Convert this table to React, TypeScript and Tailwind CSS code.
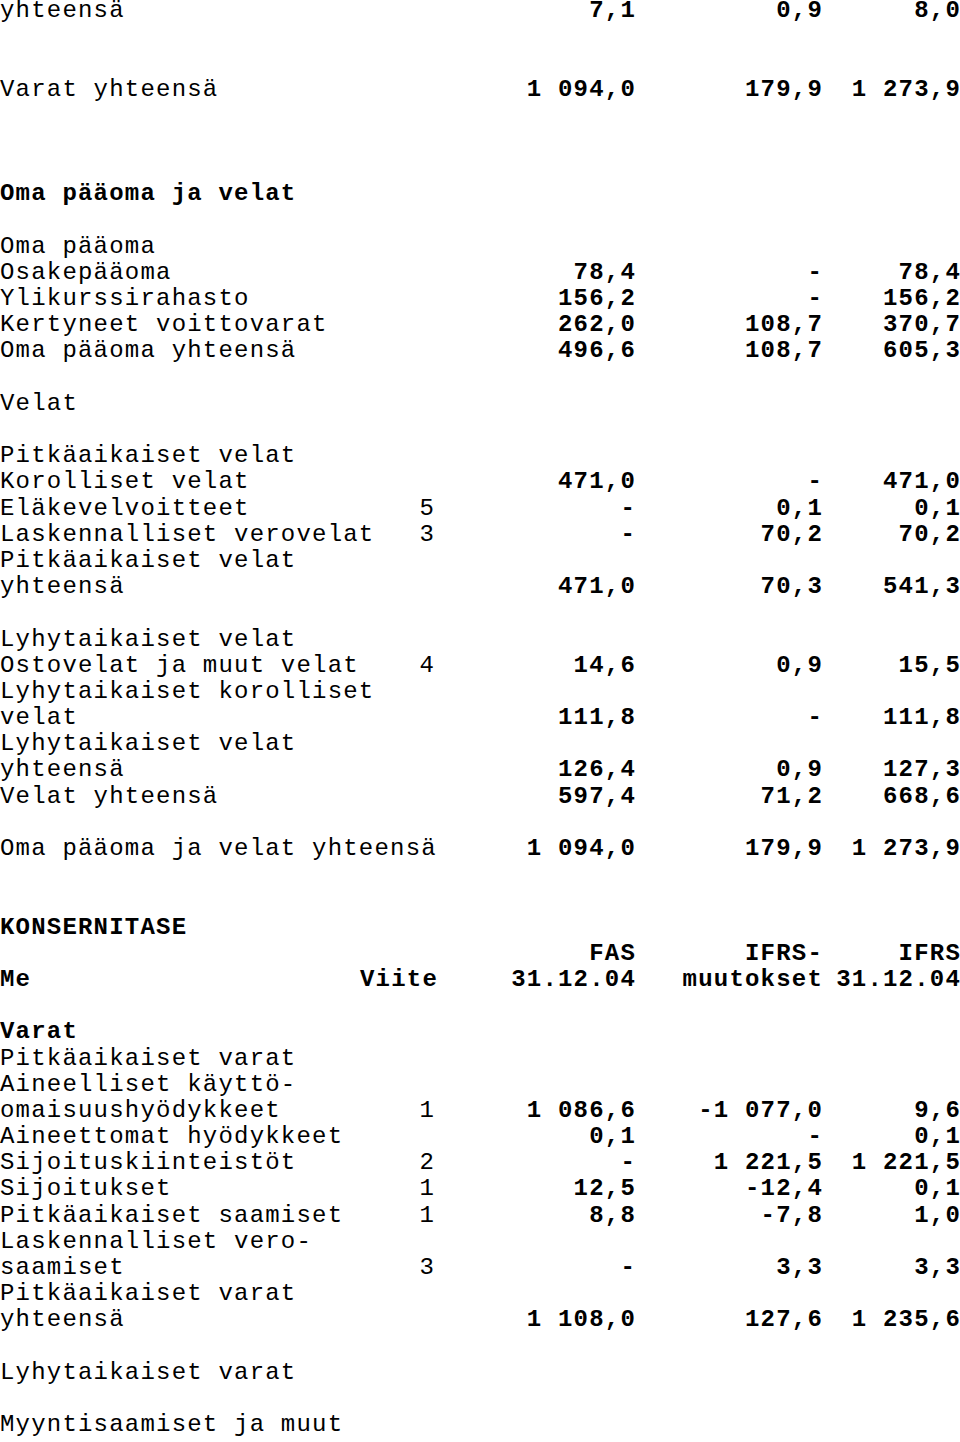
type Row = {
  l?: string;
  v?: string;
  a?: string;
  b?: string;
  c?: string;
  bold?: boolean;
};

const rows: (Row | null)[] = [
  { l: 'yhteensä', a: '7,1', b: '0,9', c: '8,0' },
  null,
  null,
  { l: 'Varat yhteensä', a: '1 094,0', b: '179,9', c: '1 273,9' },
  null,
  null,
  null,
  { l: 'Oma pääoma ja velat', bold: true },
  null,
  { l: 'Oma pääoma' },
  { l: 'Osakepääoma', a: '78,4', b: '-', c: '78,4' },
  { l: 'Ylikurssirahasto', a: '156,2', b: '-', c: '156,2' },
  { l: 'Kertyneet voittovarat', a: '262,0', b: '108,7', c: '370,7' },
  { l: 'Oma pääoma yhteensä', a: '496,6', b: '108,7', c: '605,3' },
  null,
  { l: 'Velat' },
  null,
  { l: 'Pitkäaikaiset velat' },
  { l: 'Korolliset velat', a: '471,0', b: '-', c: '471,0' },
  { l: 'Eläkevelvoitteet', v: '5', a: '-', b: '0,1', c: '0,1' },
  { l: 'Laskennalliset verovelat', v: '3', a: '-', b: '70,2', c: '70,2' },
  { l: 'Pitkäaikaiset velat' },
  { l: 'yhteensä', a: '471,0', b: '70,3', c: '541,3' },
  null,
  { l: 'Lyhytaikaiset velat' },
  { l: 'Ostovelat ja muut velat', v: '4', a: '14,6', b: '0,9', c: '15,5' },
  { l: 'Lyhytaikaiset korolliset' },
  { l: 'velat', a: '111,8', b: '-', c: '111,8' },
  { l: 'Lyhytaikaiset velat' },
  { l: 'yhteensä', a: '126,4', b: '0,9', c: '127,3' },
  { l: 'Velat yhteensä', a: '597,4', b: '71,2', c: '668,6' },
  null,
  { l: 'Oma pääoma ja velat yhteensä', a: '1 094,0', b: '179,9', c: '1 273,9' },
  null,
  null,
  { l: 'KONSERNITASE', bold: true },
  { a: 'FAS', b: 'IFRS-', c: 'IFRS', bold: true },
  { l: 'Me', v: 'Viite', a: '31.12.04', b: 'muutokset', c: '31.12.04', bold: true },
  null,
  { l: 'Varat', bold: true },
  { l: 'Pitkäaikaiset varat' },
  { l: 'Aineelliset käyttö-' },
  { l: 'omaisuushyödykkeet', v: '1', a: '1 086,6', b: '-1 077,0', c: '9,6' },
  { l: 'Aineettomat hyödykkeet', a: '0,1', b: '-', c: '0,1' },
  { l: 'Sijoituskiinteistöt', v: '2', a: '-', b: '1 221,5', c: '1 221,5' },
  { l: 'Sijoitukset', v: '1', a: '12,5', b: '-12,4', c: '0,1' },
  { l: 'Pitkäaikaiset saamiset', v: '1', a: '8,8', b: '-7,8', c: '1,0' },
  { l: 'Laskennalliset vero-' },
  { l: 'saamiset', v: '3', a: '-', b: '3,3', c: '3,3' },
  { l: 'Pitkäaikaiset varat' },
  { l: 'yhteensä', a: '1 108,0', b: '127,6', c: '1 235,6' },
  null,
  { l: 'Lyhytaikaiset varat' },
  null,
  { l: 'Myyntisaamiset ja muut' },
];

const Line = ({ row }: { row: Row | null }) => {
  if (!row) return <div className="h-[26.2px]" />;
  const weight = row.bold ? 'font-bold' : 'font-normal';
  return (
    <div className="grid grid-cols-[360px_75px_201px_187px_138px] h-[26.2px] leading-[26.2px] whitespace-nowrap">
      <span className={weight}>{row.l}</span>
      <span className={`text-right ${weight}`}>{row.v}</span>
      <span className="text-right font-bold">{row.a}</span>
      <span className="text-right font-bold">{row.b}</span>
      <span className="text-right font-bold">{row.c}</span>
    </div>
  );
};

export default function App() {
  return (
    <div className="w-[960px] h-[1442px] overflow-hidden bg-white text-black">
      <div className="-mt-[2px] font-['Liberation_Mono',monospace] text-[24px] tracking-[1.2px]">
        {rows.map((row, i) => (
          <Line key={i} row={row} />
        ))}
      </div>
    </div>
  );
}
